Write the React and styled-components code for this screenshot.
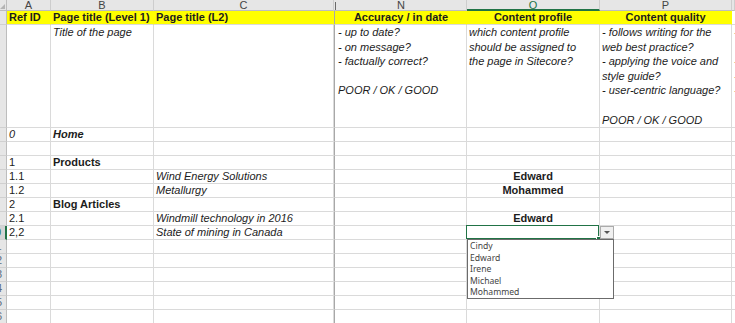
import React from 'react';
import styled, { createGlobalStyle, css } from 'styled-components';

const Global = createGlobalStyle`
  html, body { margin: 0; padding: 0; background: #fff; overflow: hidden; }
  body { font-family: "Liberation Sans", Arial, sans-serif; }
  #root { width: 735px; height: 323px; overflow: hidden; }
`;

const GREEN = '#217346';
const GRID = '#dadada';

const Sheet = styled.div`
  display: grid;
  grid-template-columns: 7px 44px 103px 180px 2px 131px 133px 132px 3px;
  grid-template-rows: 11px 14px 103px repeat(14, 14px);
  width: 735px;
  height: 323px;
  overflow: hidden;
  font-size: 11px;
  color: #1c1c1c;
`;

const Corner = styled.div`
  background: #e6e6e6;
  border-right: 1px solid #bdbdbd;
  border-bottom: 1px solid #bdbdbd;
  box-sizing: border-box;
  position: relative;
  &::after {
    content: '';
    position: absolute;
    right: 1px;
    bottom: 1px;
    border-left: 5px solid transparent;
    border-bottom: 5px solid #b4b4b4;
  }
`;

const ColHead = styled.div`
  background: #e6e6e6;
  box-sizing: border-box;
  border-right: 1px solid #cdcdcd;
  border-bottom: ${p => (p.$sel ? `2px solid ${GREEN}` : '1px solid #bdbdbd')};
  color: ${p => (p.$sel ? GREEN : '#444')};
  font-size: 11px;
  line-height: 10px;
  text-align: center;
  overflow: hidden;
  white-space: nowrap;
`;

const SepHead = styled.div`
  background: #e6e6e6;
  border-bottom: 1px solid #bdbdbd;
  box-sizing: border-box;
  display: flex;
  justify-content: center;
  &::before {
    content: '';
    width: 1px;
    margin-top: 2px;
    height: 8px;
    background: #6a6a6a;
  }
`;

const RowHead = styled.div`
  background: ${p => (p.$sel ? '#d4d4d4' : '#e6e6e6')};
  box-sizing: border-box;
  border-right: ${p => (p.$sel ? `2px solid ${GREEN}` : '1px solid #bdbdbd')};
  border-bottom: 1px solid #d0d0d0;
  overflow: hidden;
  position: relative;
`;

const RowNum = styled.span`
  position: absolute;
  top: 0;
  right: -1px;
  width: 22px;
  text-align: center;
  font-size: 11px;
  line-height: 13px;
  color: ${p => (p.$sel ? GREEN : '#5b6b80')};
`;

const Cell = styled.div`
  box-sizing: border-box;
  border-right: 1px solid ${p => (p.$fill ? p.$fill : GRID)};
  border-bottom: 1px solid ${GRID};
  background: ${p => p.$fill || '#fff'};
  padding: 0 2px;
  line-height: 13px;
  white-space: pre;
  overflow: ${p => (p.$open ? 'visible' : 'hidden')};
  text-align: ${p => p.$align || 'left'};
  font-weight: ${p => (p.$b ? 700 : 400)};
  font-style: ${p => (p.$i ? 'italic' : 'normal')};
  color: ${p => p.$color || '#1c1c1c'};
  ${p =>
    p.$tall &&
    css`
      line-height: 14.6px;
    `}
  ${p =>
    p.$open &&
    css`
      position: relative;
      z-index: 5;
    `}
`;

const Sep = styled.div`
  box-sizing: border-box;
  border-left: 1px solid #a8a8a8;
  border-bottom: 1px solid ${GRID};
  background: ${p => p.$fill || '#fff'};
`;

const SelBox = styled.div`
  position: absolute;
  left: -1px;
  top: -1px;
  right: 0;
  bottom: 0;
  border: 1px solid ${GREEN};
  pointer-events: none;
  &::after {
    content: '';
    position: absolute;
    right: -3px;
    bottom: -3px;
    width: 3px;
    height: 3px;
    background: ${GREEN};
    border: 1px solid #fff;
  }
`;

const DropBtn = styled.div`
  position: absolute;
  left: calc(100% + 1px);
  top: 0;
  width: 14px;
  height: 13px;
  box-sizing: border-box;
  background: #f0f0f0;
  border: 1px solid #ababab;
  display: flex;
  align-items: center;
  justify-content: center;
  &::before {
    content: '';
    border-left: 3px solid transparent;
    border-right: 3px solid transparent;
    border-top: 3px solid #555;
  }
`;

const List = styled.div`
  position: absolute;
  left: 0;
  top: 13px;
  width: 147px;
  height: 60px;
  box-sizing: border-box;
  background: #fff;
  border: 1px solid #6b6b6b;
  padding-top: 1px;
  display: flex;
  flex-direction: column;
  font-style: normal;
  font-weight: 400;
  text-align: left;
`;

const Item = styled.div`
  height: 11.6px;
  line-height: 11.6px;
  padding-left: 2px;
  font-family: "Noto Sans", "Liberation Sans", sans-serif;
  font-size: 8.6px;
  color: #444;
`;

const cols = ['A', 'B', 'C', 'N', 'O', 'P', 'Q'];

const YELLOW = '#ffff00';

const rows = [
  {
    fill: YELLOW,
    A: { t: 'Ref ID', b: true },
    B: { t: 'Page title (Level 1)', b: true },
    C: { t: 'Page title (L2)', b: true },
    N: { t: 'Accuracy / in date', b: true, align: 'center' },
    O: { t: 'Content profile', b: true, align: 'center' },
    P: { t: 'Content quality', b: true, align: 'center' },
    Q: { fill: '#fff' },
  },
  {
    tall: true,
    B: { t: 'Title of the page', i: true },
    N: { t: '- up to date?\n- on message?\n- factually correct?\n\nPOOR / OK / GOOD', i: true },
    O: { t: 'which content profile\nshould be assigned to\nthe page in Sitecore?', i: true },
    P: {
      t: '- follows writing for the\nweb best practice?\n- applying the voice and\nstyle guide?\n- user-centric language?\n\nPOOR / OK / GOOD',
      i: true,
    },
    Q: { t: '-\n\n-\n-\n-', color: '#d9a070' },
  },
  { A: { t: '0', i: true }, B: { t: 'Home', b: true, i: true } },
  {},
  { A: { t: '1' }, B: { t: 'Products', b: true } },
  { A: { t: '1.1' }, C: { t: 'Wind Energy Solutions', i: true }, O: { t: 'Edward', b: true, align: 'center' } },
  { A: { t: '1.2' }, C: { t: 'Metallurgy', i: true }, O: { t: 'Mohammed', b: true, align: 'center' } },
  { A: { t: '2' }, B: { t: 'Blog Articles', b: true } },
  { A: { t: '2.1' }, C: { t: 'Windmill technology in 2016', i: true }, O: { t: 'Edward', b: true, align: 'center' } },
  { sel: true, A: { t: '2,2' }, C: { t: 'State of mining in Canada', i: true }, O: { dropdown: true } },
  {}, {}, {}, {}, {}, {},
];

const options = ['Cindy', 'Edward', 'Irene', 'Michael', 'Mohammed'];

function Dropdown() {
  return (
    <>
      <SelBox />
      <DropBtn />
      <List>
        {options.map(o => (
          <Item key={o}>{o}</Item>
        ))}
      </List>
    </>
  );
}

export default function App() {
  return (
    <>
      <Global />
      <Sheet>
        <Corner />
        <ColHead>A</ColHead>
        <ColHead>B</ColHead>
        <ColHead>C</ColHead>
        <SepHead />
        <ColHead>N</ColHead>
        <ColHead $sel>O</ColHead>
        <ColHead>P</ColHead>
        <ColHead />
        {rows.map((r, ri) => {
          const num = ri + 1;
          return (
            <React.Fragment key={ri}>
              <RowHead $sel={r.sel}>
                <RowNum $sel={r.sel}>{num}</RowNum>
              </RowHead>
              {cols.map(c => {
                const d = r[c] || {};
                const fill = d.fill || r.fill;
                const cell = (
                  <Cell
                    key={c}
                    $b={d.b}
                    $i={d.i}
                    $align={d.align}
                    $fill={fill === '#fff' ? undefined : fill}
                    $tall={r.tall}
                    $open={d.dropdown}
                    $color={d.color}
                  >
                    {d.dropdown ? <Dropdown /> : d.t}
                  </Cell>
                );
                if (c === 'C') {
                  return (
                    <React.Fragment key={c}>
                      {cell}
                      <Sep $fill={r.fill} />
                    </React.Fragment>
                  );
                }
                return cell;
              })}
            </React.Fragment>
          );
        })}
      </Sheet>
    </>
  );
}
